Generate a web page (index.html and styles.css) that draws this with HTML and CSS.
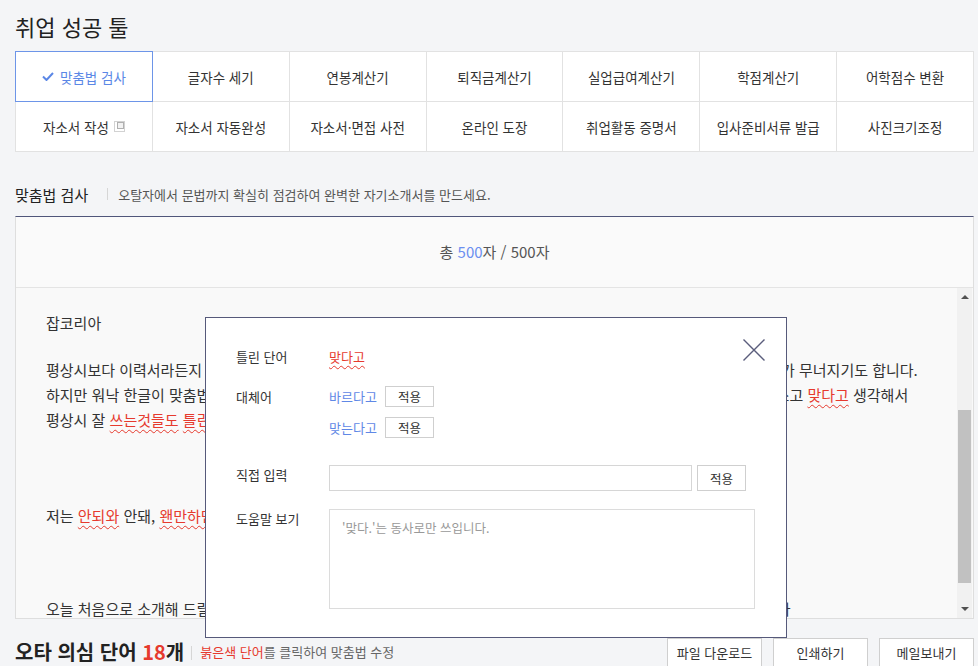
FILE: index.html
```html
<!DOCTYPE html>
<html lang="ko">
<head>
    <meta charset="UTF-8">
    <meta name="viewport" content="width=device-width, initial-scale=1.0">
    <title>맞춤법 검사 - 취업 성공 툴</title>
    <link rel="stylesheet" href="styles.css">
</head>
<body>
<div class="page">
    <h1 class="page-title">취업 성공 툴</h1>

    <ul class="tool-grid">
        <li class="tool-item active">
            <svg class="check-icon" width="12" height="9" viewBox="0 0 12 9"><polyline points="1,4.5 4.5,8 11,1" fill="none" stroke="#5b87e6" stroke-width="2"/></svg>
            맞춤법 검사
        </li>
        <li class="tool-item">글자수 세기</li>
        <li class="tool-item">연봉계산기</li>
        <li class="tool-item">퇴직금계산기</li>
        <li class="tool-item">실업급여계산기</li>
        <li class="tool-item">학점계산기</li>
        <li class="tool-item">어학점수 변환</li>
        <li class="tool-item">
            자소서 작성
            <svg class="popup-icon" width="11" height="11" viewBox="0 0 11 11"><rect x="0.5" y="0.5" width="10" height="10" fill="#fff" stroke="#d2d2d2"/><rect x="3.5" y="1.5" width="6" height="6" fill="#f2f2f2" stroke="#b0b0b0"/></svg>
        </li>
        <li class="tool-item">자소서 자동완성</li>
        <li class="tool-item">자소서·면접 사전</li>
        <li class="tool-item">온라인 도장</li>
        <li class="tool-item">취업활동 증명서</li>
        <li class="tool-item">입사준비서류 발급</li>
        <li class="tool-item">사진크기조정</li>
    </ul>

    <div class="section-header">
        <h2>맞춤법 검사</h2>
        <span class="divider"></span>
        <p>오탈자에서 문법까지 확실히 점검하여 완벽한 자기소개서를 만드세요.</p>
    </div>

    <div class="checker-box">
        <div class="char-count">총 <em>500</em>자 / 500자</div>
        <div class="checker-body">
            <div class="checker-text">
                <p>잡코리아</p>
                <p class="gap-small">
                    평상시보다 이력서라든지 자기소개서를 작성할 때면 맞춤법이 맞는지 자꾸 신경이 쓰여 결국 제출할 때까지 자신감 자체가 무너지기도 합니다.<br>
                    하지만 워낙 한글이 맞춤법이 까다롭고 비슷한 단어도 많아서 평소에 자주 틀리면서 그냥 넘어가고 습관처럼 틀린 채로 쓰고 <span class="typo">맞다고</span> 생각해서<br>
                    평상시 잘 <span class="typo">쓰는것들도</span> <span class="typo">틀린적이</span> 많아 다시 한번 확인하게 되었습니다.
                </p>
                <p class="gap-large">저는 <span class="typo">안되와</span> 안돼, <span class="typo">왠만하면</span>과 웬만하면을 늘 헷갈려 합니다.</p>
                <p class="gap-last">오늘 처음으로 소개해 드릴 잡코리아 맞춤법 검사기는 자기소개서의 오탈자를 한번에 찾아주는 아주 편리한 서비스입니다</p>
            </div>
            <div class="scrollbar">
                <span class="arrow up"></span>
                <div class="track"><span class="thumb"></span></div>
                <span class="arrow down"></span>
            </div>
        </div>
    </div>

    <div class="result-bar">
        <strong class="result-title">오타 의심 단어 <em>18</em>개</strong>
        <span class="divider"></span>
        <p class="result-desc"><em>붉은색 단어</em>를 클릭하여 맞춤법 수정</p>
        <div class="result-actions">
            <button class="result-btn">파일 다운로드</button>
            <button class="result-btn">인쇄하기</button>
            <button class="result-btn">메일보내기</button>
        </div>
    </div>

    <div class="modal">
        <button class="modal-close" aria-label="닫기">
            <svg width="22" height="22" viewBox="0 0 22 22"><path d="M0.5 0.5 L21.5 21.5 M21.5 0.5 L0.5 21.5" stroke="#5a5d7c" stroke-width="1.4"/></svg>
        </button>
        <div class="fix-row row-wrong">
            <div class="fix-label">틀린 단어</div>
            <div class="fix-field"><span class="typo">맞다고</span></div>
        </div>
        <div class="fix-row row-suggest">
            <div class="fix-label">대체어</div>
            <div class="fix-field suggest-list">
                <div class="suggest-item"><span class="suggest-word">바르다고</span><button class="apply-btn">적용</button></div>
                <div class="suggest-item"><span class="suggest-word">맞는다고</span><button class="apply-btn">적용</button></div>
            </div>
        </div>
        <div class="fix-row row-input">
            <div class="fix-label">직접 입력</div>
            <div class="fix-field">
                <input type="text" class="fix-input">
                <button class="apply-btn tall">적용</button>
            </div>
        </div>
        <div class="fix-row row-help">
            <div class="fix-label">도움말 보기</div>
            <div class="fix-field">
                <div class="help-box">'맞다.'는 동사로만 쓰입니다.</div>
            </div>
        </div>
    </div>
</div>
</body>
</html>
```

FILE: styles.css
```css
* {
    margin: 0;
    padding: 0;
    box-sizing: border-box;
}

html, body {
    height: 666px;
    overflow: hidden;
}

body {
    font-family: "Noto Sans CJK KR", "Noto Sans", sans-serif;
    background: #f4f5f7;
    color: #333;
}

em {
    font-style: normal;
}

.page {
    position: relative;
    width: 959px;
    margin-left: 15px;
    padding-top: 11px;
}

.page-title {
    font-size: 22px;
    font-weight: normal;
    line-height: 30px;
    color: #222;
}

/* 툴 메뉴 */
.tool-grid {
    list-style: none;
    margin-top: 10px;
    display: grid;
    grid-template-columns: repeat(7, 1fr);
    gap: 1px;
    padding: 1px;
    background: #e2e2e2;
}

.tool-item {
    height: 49px;
    background: #fff;
    display: flex;
    align-items: center;
    justify-content: center;
    font-size: 13.5px;
    color: #333;
    cursor: pointer;
}

.tool-item.active {
    position: relative;
    z-index: 1;
    color: #5b87e6;
    box-shadow: 0 0 0 1px #6d95e8;
}

.check-icon {
    margin-right: 6px;
}

.popup-icon {
    margin-left: 5px;
}

/* 섹션 타이틀 */
.section-header {
    display: flex;
    align-items: center;
    margin-top: 30px;
    height: 24px;
    margin-bottom: 10px;
}

.section-header h2 {
    font-size: 15px;
    font-weight: normal;
    color: #222;
}

.divider {
    width: 1px;
    height: 12px;
    background: #d6d6d6;
    margin: 0 10px 0 19px;
}

.section-header p {
    font-size: 13px;
    color: #555;
}

/* 검사 박스 */
.checker-box {
    border: 1px solid #dedede;
    border-top-color: #50567a;
}

.char-count {
    height: 71px;
    line-height: 70px;
    background: #fafafa;
    border-bottom: 1px solid #e4e4e4;
    text-align: center;
    font-size: 15px;
    color: #555;
}

.char-count em {
    color: #6b8ff0;
}

.checker-body {
    display: flex;
    height: 330px;
    background: #f9f9f9;
}

.checker-text {
    flex: 1;
    overflow: hidden;
    padding: 22px 0 0 30px;
    font-size: 15px;
    line-height: 25px;
    color: #333;
    white-space: nowrap;
}

.gap-small {
    margin-top: 22px;
}

.gap-large {
    margin-top: 71px;
}

.gap-last {
    margin-top: 68px;
}

.typo {
    color: #e63a2e;
    text-decoration: underline wavy #e63a2e;
    text-decoration-thickness: 1px;
    text-underline-offset: 3px;
    cursor: pointer;
}

/* 스크롤바 */
.scrollbar {
    width: 15px;
    margin-right: 1px;
    background: #f1f1f1;
    display: flex;
    flex-direction: column;
    align-items: center;
}

.arrow {
    display: block;
    width: 0;
    height: 0;
    border-left: 4px solid transparent;
    border-right: 4px solid transparent;
}

.arrow.up {
    margin: 7px 0 6px;
    border-bottom: 4px solid #505050;
}

.arrow.down {
    margin: 6px 0 7px;
    border-top: 4px solid #505050;
}

.track {
    flex: 1;
    width: 100%;
    padding: 0 1px;
}

.thumb {
    display: block;
    margin-top: 105px;
    height: 173px;
    background: #c1c1c1;
}

/* 하단 결과 */
.result-bar {
    display: flex;
    align-items: flex-start;
    margin-top: 19px;
    height: 40px;
}

.result-title {
    font-size: 20px;
    line-height: 28px;
    color: #222;
}

.result-title em {
    color: #e63a2e;
}

.result-bar .divider {
    margin: 8px 8px 0 7px;
    height: 14px;
}

.result-desc {
    font-size: 13px;
    line-height: 28px;
    color: #666;
}

.result-desc em {
    color: #e63a2e;
}

.result-actions {
    margin-left: auto;
    display: flex;
    gap: 11px;
}

.result-btn {
    width: 95px;
    height: 40px;
    padding-bottom: 12px;
    background: #fff;
    border: 1px solid #cfcfcf;
    font-family: inherit;
    font-size: 13px;
    color: #333;
    cursor: pointer;
}

/* 맞춤법 수정 팝업 */
.modal {
    position: absolute;
    left: 190px;
    top: 317px;
    width: 582px;
    height: 321px;
    background: #fff;
    border: 1px solid #56597a;
    padding: 29px 30px 0 30px;
    font-size: 13px;
    color: #333;
}

.modal-close {
    position: absolute;
    top: 21px;
    right: 21px;
    width: 22px;
    height: 22px;
    border: none;
    background: none;
    cursor: pointer;
}

.modal-close svg {
    display: block;
}

.fix-row {
    display: flex;
}

.fix-label {
    width: 93px;
    line-height: 20px;
}

.fix-field {
    display: flex;
    align-items: flex-start;
}

.row-wrong {
    height: 20px;
    line-height: 20px;
    margin-bottom: 19px;
}

.row-suggest {
    margin-bottom: 27px;
}

.row-suggest .fix-label {
    line-height: 21px;
}

.suggest-list {
    flex-direction: column;
    gap: 10px;
}

.suggest-item {
    display: flex;
    align-items: center;
}

.suggest-word {
    width: 56px;
    color: #5f88e6;
}

.apply-btn {
    width: 49px;
    height: 21px;
    background: #fff;
    border: 1px solid #cfcfcf;
    font-family: inherit;
    font-size: 12.5px;
    color: #333;
    cursor: pointer;
}

.apply-btn.tall {
    height: 26px;
    margin-left: 5px;
}

.row-input {
    margin-bottom: 18px;
}

.fix-input {
    width: 363px;
    height: 26px;
    border: 1px solid #d6d6d6;
    background: #fff;
}

.help-box {
    width: 426px;
    height: 100px;
    border: 1px solid #dcdcdc;
    padding: 9px 12px;
    font-size: 12.5px;
    line-height: 18px;
    color: #999;
}
```
